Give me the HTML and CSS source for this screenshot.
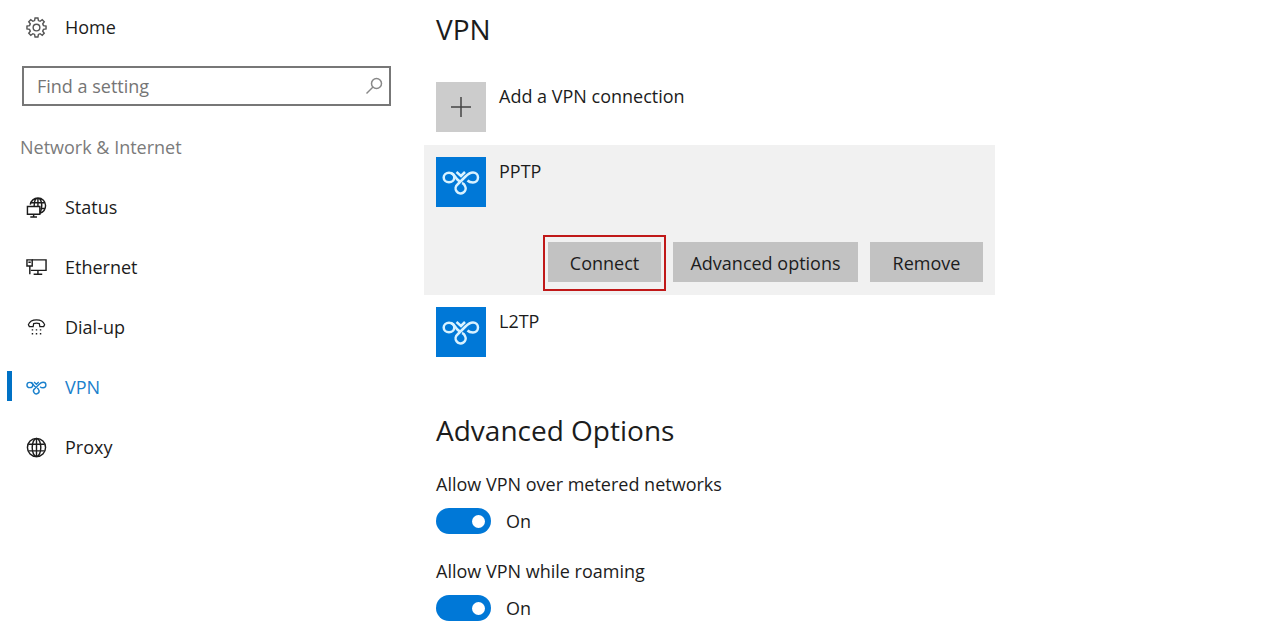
FILE: index.html
```html
<!DOCTYPE html>
<html lang="en">
<head>
  <meta charset="UTF-8">
  <title>Settings - VPN</title>
  <link rel="stylesheet" href="styles.css">
</head>
<body>

  <!-- shared VPN glyph -->
  <svg class="defs" width="0" height="0" aria-hidden="true">
    <symbol id="vpn-icon" viewBox="0 0 38 28">
      <g fill="none" stroke="currentColor" stroke-width="2.500">
        <ellipse cx="7" cy="9.500" rx="5.300" ry="4.800"/>
        <path d="M9 5C12 6 13 8.500 14.500 10.500C15.500 12 16.500 12.500 18 13.500"/>
        <path d="M25.500 12.500C27 14 29 14.500 31 14.500A5 5 0 0 0 31 4.500C27.500 4.500 25.500 6.500 23.500 8.500L15.500 16.500A5 5 0 1 0 23 18C22.500 16.500 21.500 15.500 20 15"/>
        <path d="M14.500 4L19 8L23 4"/>
      </g>
    </symbol>
  </svg>

  <div class="layout">
    <aside class="sidebar">
      <a href="#" class="nav-link">
        <svg class="icon" viewBox="0 0 22 22" fill="none" stroke="#555" stroke-width="1.500">
          <path d="M9.500 1h3l.5 2.700 1.800.8L17 2.900 19.100 5l-1.600 2.200.8 1.800 2.700.5v3l-2.700.5-.8 1.800 1.600 2.200L17 19.100l-2.200-1.600-1.800.8-.5 2.700h-3L9 18.300l-1.800-.8L5 19.100 2.900 17l1.600-2.200L3.700 13 1 12.500v-3L3.700 9l.8-1.800L2.900 5 5 2.900l2.200 1.600L9 3.700z"/>
          <circle cx="11" cy="11" r="3.500"/>
        </svg>
        <span>Home</span>
      </a>

      <form class="search">
        <input type="text" placeholder="Find a setting" aria-label="Find a setting">
        <svg class="search-icon" viewBox="0 0 18 18" fill="none" stroke="currentColor" stroke-width="1.500">
          <circle cx="11.500" cy="6.500" r="5"/>
          <path d="M8 10L1.500 16.500"/>
        </svg>
      </form>

      <h2 class="group">Network &amp; Internet</h2>

      <nav>
        <a href="#" class="nav-link">
          <svg class="icon" viewBox="0 0 22 22" fill="none" stroke="currentColor" stroke-width="1.500">
            <path d="M4.500 8C5 4 8.500 1 12.500 1C17 1 20.500 4.500 20.500 9C20.500 13 18 16 14.500 17M8.500 10C8.500 5 10 1 12.500 1C15 1 16.500 5 16.500 9C16.500 12 16 14 15 16M12.500 1V10M5 6H20M15 12H20"/>
            <path d="M1.500 10H14.500V18H1.500ZM8 18V21M4.500 21H11.500"/>
          </svg>
          <span>Status</span>
        </a>
        <a href="#" class="nav-link">
          <svg class="icon" viewBox="0 0 22 22" fill="none" stroke="currentColor" stroke-width="1.500">
            <path d="M6 3H21V14H5M12.500 14V18M8 18H17"/>
            <path d="M1 3H6.500V9.500H1ZM2.500 5.500H5M4 9.500V18"/>
          </svg>
          <span>Ethernet</span>
        </a>
        <a href="#" class="nav-link">
          <svg class="icon" viewBox="0 0 22 22" fill="none" stroke="currentColor" stroke-width="1.300">
            <path d="M2.500 8C4 4 7 3 11 3C15 3 18 4 19.500 8L18.500 10H14.500L14 7C12 6.300 10 6.300 8 7L7.500 10H3.500Z"/>
            <path d="M6 13.500H7.500M10.250 13.500H11.750M14.500 13.500H16M6 17.500H7.500M10.250 17.500H11.750M14.500 17.500H16" stroke-width="1.500"/>
          </svg>
          <span>Dial-up</span>
        </a>
        <a href="#" class="nav-link active" aria-current="page">
          <svg class="icon"><use href="#vpn-icon"/></svg>
          <span>VPN</span>
        </a>
        <a href="#" class="nav-link">
          <svg class="icon" viewBox="0 0 22 22" fill="none" stroke="currentColor" stroke-width="1.500">
            <circle cx="11" cy="11" r="9.500"/>
            <ellipse cx="11" cy="11" rx="4.500" ry="9.500"/>
            <path d="M11 1.500V20.500M2.500 7.500H19.500M2.500 14.500H19.500"/>
          </svg>
          <span>Proxy</span>
        </a>
      </nav>
    </aside>

    <main class="content">
      <h1>VPN</h1>

      <div class="connections">
        <button type="button" class="connection">
          <span class="tile tile-add">
            <svg width="20" height="20" viewBox="0 0 20 20" stroke="currentColor" stroke-width="1.500"><path d="M10 0V20M0 10H20"/></svg>
          </span>
          <span>Add a VPN connection</span>
        </button>

        <div class="selected">
          <button type="button" class="connection">
            <span class="tile"><svg width="38" height="28"><use href="#vpn-icon"/></svg></span>
            <span>PPTP</span>
          </button>
          <div class="actions">
            <button type="button" class="btn highlight">Connect</button>
            <button type="button" class="btn btn-wide">Advanced options</button>
            <button type="button" class="btn">Remove</button>
          </div>
        </div>

        <button type="button" class="connection">
          <span class="tile"><svg width="38" height="28"><use href="#vpn-icon"/></svg></span>
          <span>L2TP</span>
        </button>
      </div>

      <h1>Advanced Options</h1>

      <div class="option">
        <label for="metered">Allow VPN over metered networks</label>
        <div class="switch">
          <input type="checkbox" id="metered" role="switch" checked>
          <span>On</span>
        </div>
      </div>
      <div class="option">
        <label for="roaming">Allow VPN while roaming</label>
        <div class="switch">
          <input type="checkbox" id="roaming" role="switch" checked>
          <span>On</span>
        </div>
      </div>
    </main>
  </div>

</body>
</html>
```
FILE: styles.css
```css
* {
  box-sizing: border-box;
}

body {
  margin: 0;
  background-color: #fff;
  color: #1c1c1c;
  font-family: "Segoe UI", "Open Sans", sans-serif;
  font-size: 18px;
  line-height: 24px;
}

button, input {
  font: inherit;
  color: inherit;
}

.defs {
  position: absolute;
}

.layout {
  display: flex;
}

/* sidebar */
.sidebar {
  flex: 0 0 424px;
  padding-right: 33px;
}

.nav-link {
  display: flex;
  align-items: center;
  height: 60px;
  padding-left: 26px;
  gap: 18px;
  color: inherit;
  text-decoration: none;
}

.sidebar > .nav-link {
  height: 54px;
}

.icon {
  width: 21px;
  height: 21px;
}

.active {
  position: relative;
  color: #1a80cc;
}

.active::before {
  content: "";
  position: absolute;
  left: 7px;
  top: 14px;
  width: 5px;
  height: 30px;
  background-color: #0071c5;
}

.search {
  display: flex;
  align-items: center;
  height: 40px;
  margin: 12px 0 0 22px;
  padding: 0 6px 0 13px;
  border: 2px solid #777;
}

.search input {
  flex: 1;
  min-width: 0;
  padding: 0;
  border: 0;
  outline: 0;
  background: none;
}

.search input::placeholder {
  color: #757575;
  opacity: 1;
}

.search-icon {
  width: 18px;
  height: 18px;
  color: #888;
}

.group {
  margin: 29px 0 18px 20px;
  font-size: 18px;
  font-weight: 400;
  color: #7b7b7b;
}

/* main column */
.content {
  flex: 1;
  max-width: 571px;
  padding-top: 9px;
}

h1 {
  margin: 0 12px;
  font-size: 28px;
  line-height: 40px;
  font-weight: 400;
}

.connections {
  margin: 21px 0 40px;
}

.connection {
  display: flex;
  align-items: flex-start;
  gap: 13px;
  width: 100%;
  height: 75px;
  padding: 12px;
  border: 0;
  background: none;
  line-height: 28px;
  text-align: left;
}

.tile {
  display: flex;
  align-items: center;
  justify-content: center;
  width: 50px;
  height: 50px;
  background-color: #0078d7;
  color: #d8f2ff;
}

.tile-add {
  background-color: #ccc;
  color: #444;
}

.selected {
  background-color: #f1f1f1;
}

.actions {
  display: flex;
  justify-content: flex-end;
  gap: 12px;
  padding: 22px 12px 13px;
}

.btn {
  width: 113px;
  height: 40px;
  padding: 2px 0 0;
  border: 0;
  background-color: #c2c2c2;
}

.btn-wide {
  width: 185px;
}

.highlight {
  position: relative;
}

/* red frame around the button */
.highlight::after {
  content: "";
  position: absolute;
  inset: -7px -5px -9px -5px;
  border: 2px solid #c01818;
}

.option {
  margin: 22px 12px 25px;
}

.option label {
  display: block;
}

.switch {
  display: flex;
  align-items: center;
  gap: 15px;
  margin-top: 12px;
}

.switch input {
  appearance: none;
  display: flex;
  align-items: center;
  justify-content: flex-end;
  width: 55px;
  height: 26px;
  margin: 0;
  padding-right: 6px;
  border-radius: 13px;
  background-color: #0078d7;
}

.switch input::before {
  content: "";
  width: 13px;
  height: 13px;
  border-radius: 50%;
  background-color: #fff;
}
```
